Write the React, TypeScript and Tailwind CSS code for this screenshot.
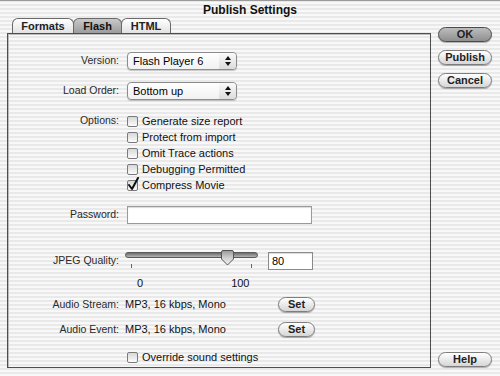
import React from "react";

const stripes =
  "bg-[repeating-linear-gradient(180deg,#e9e9e9_0px,#e9e9e9_2px,#f8f8f8_2px,#f8f8f8_4px)]";

function Label({ children }: { children: React.ReactNode }) {
  return <div className="w-[111px] shrink-0 text-right text-[10.5px] text-[#2a2a2a]">{children}</div>;
}

function Popup({ value }: { value: string }) {
  return (
    <div className="ml-[8px] flex h-[18px] w-[110px] items-center rounded-[4px] border border-[#8c8c8c] bg-gradient-to-b from-white to-[#f1f1f1] shadow-[0_1px_1px_rgba(0,0,0,0.2)]">
      <span className="flex-1 pl-[5px] text-[11px] leading-none">{value}</span>
      <span className="flex h-full w-[17px] flex-col items-center justify-center gap-[2px] rounded-r-[4px] bg-gradient-to-b from-[#fafafa] to-[#dcdcdc]">
        <svg width="6" height="4" viewBox="0 0 6 4"><path d="M3 0L6 4H0Z" fill="#111" /></svg>
        <svg width="6" height="4" viewBox="0 0 6 4"><path d="M0 0H6L3 4Z" fill="#111" /></svg>
      </span>
    </div>
  );
}

function Check({ label, checked = false }: { label: string; checked?: boolean }) {
  return (
    <div className="flex h-[16px] items-center">
      <span className="relative h-[11px] w-[11px] rounded-[2px] border border-[#7a7a7a] bg-gradient-to-b from-[#d8d8d8] to-[#fbfbfb]">
        {checked && (
          <svg className="absolute -left-[1px] -top-[4px]" width="13" height="15" viewBox="0 0 13 15">
            <path d="M2 8L5 12L11 1" stroke="#111" strokeWidth="2" fill="none" strokeLinecap="round" strokeLinejoin="round" />
          </svg>
        )}
      </span>
      <span className="ml-[4px] text-[11px] text-[#111]">{label}</span>
    </div>
  );
}

function Pill({ children, w, strong = false }: { children: React.ReactNode; w: string; strong?: boolean }) {
  return (
    <div
      className={`flex h-[15px] ${w} items-center justify-center rounded-full border ${
        strong ? "border-[#4a4a4a] from-[#bdbdbd] to-[#8f8f8f]" : "border-[#7d7d7d] from-white to-[#d6d6d6]"
      } bg-gradient-to-b text-[11px] font-bold text-[#222] shadow-[0_1px_1px_rgba(0,0,0,0.3)]`}
    >
      {children}
    </div>
  );
}

function Tab({ label, w, active = false }: { label: string; w: string; active?: boolean }) {
  return (
    <div
      className={`-mr-px flex h-[15px] ${w} items-center justify-center rounded-t-[6px] border border-b-0 border-[#6a6a6a] text-[11px] font-bold ${
        active ? "bg-gradient-to-b from-[#c9c9c9] to-[#9c9c9c] text-[#111]" : "bg-gradient-to-b from-white to-[#e2e2e2] text-[#222]"
      }`}
    >
      {label}
    </div>
  );
}

export default function App() {
  const quality = 80;
  return (
    <div className={`h-[376px] w-[500px] overflow-hidden font-['Liberation_Sans',Arial,sans-serif] ${stripes}`}>
      <div className="flex h-[18px] items-center justify-center border-t border-[#9a9a9a] text-[12px] font-bold text-[#111]">
        Publish Settings
      </div>
      <div className="flex h-[358px]">
        <div className="ml-[7px] w-[424px]">
          <div className="flex h-[15px] items-end pl-[5px]">
            <Tab label="Formats" w="w-[62px]" />
            <Tab label="Flash" w="w-[49px]" active />
            <Tab label="HTML" w="w-[50px]" />
          </div>
          <div className="h-[335px] border border-[#4e4e4e] shadow-[inset_1px_1px_0_#bcbcbc]">
            <div className="pt-[18px]">
              <div className="flex h-[18px] items-center">
                <Label>Version:</Label>
                <Popup value="Flash Player 6" />
              </div>
              <div className="mt-[12px] flex h-[18px] items-center">
                <Label>Load Order:</Label>
                <Popup value="Bottom up" />
              </div>
              <div className="mt-[13px] flex">
                <div className="flex h-[16px] items-center">
                  <Label>Options:</Label>
                </div>
                <div className="ml-[8px]">
                  <Check label="Generate size report" />
                  <Check label="Protect from import" />
                  <Check label="Omit Trace actions" />
                  <Check label="Debugging Permitted" />
                  <Check label="Compress Movie" checked />
                </div>
              </div>
              <div className="mt-[13px] flex h-[18px] items-center">
                <Label>Password:</Label>
                <div className="ml-[8px] h-[18px] w-[185px] border border-[#9a9a9a] bg-white shadow-[inset_0_1px_1px_rgba(0,0,0,0.15)]" />
              </div>
              <div className="mt-[28px] flex h-[18px] items-center">
                <Label>JPEG Quality:</Label>
                <div className="relative ml-[6px] h-[18px] w-[133px]">
                  <div className="absolute left-0 right-0 top-0 h-[6px] rounded-full border border-[#5a5a5a] bg-gradient-to-b from-[#6c6c6c] to-[#b5b5b5]" />
                  <div className="absolute left-[6px] top-[12px] h-[4px] w-px bg-[#666]" />
                  <div className="absolute left-[126px] top-[12px] h-[4px] w-px bg-[#666]" />
                  <svg
                    className="absolute -top-[2px]"
                    style={{ left: 6 + (quality / 100) * 120 - 6 }}
                    width="13"
                    height="16"
                    viewBox="0 0 13 16"
                  >
                    <defs>
                      <linearGradient id="th" x1="0" y1="0" x2="0" y2="1">
                        <stop offset="0" stopColor="#9a9a9a" />
                        <stop offset="0.5" stopColor="#cfcfcf" />
                        <stop offset="1" stopColor="#f4f4f4" />
                      </linearGradient>
                    </defs>
                    <path d="M2 0.5H11Q12.5 0.5 12.5 2V9L6.5 15L0.5 9V2Q0.5 0.5 2 0.5Z" fill="url(#th)" stroke="#555" />
                  </svg>
                </div>
                <div className="ml-[10px] flex h-[18px] w-[45px] items-center border border-[#8a8a8a] bg-white pl-[3px] text-[11px] shadow-[inset_0_1px_1px_rgba(0,0,0,0.15)]">
                  {quality}
                </div>
              </div>
              <div className="mt-[6px] flex h-[14px] items-center text-[11px] text-[#111]">
                <span className="ml-[129px]">0</span>
                <span className="ml-[88px]">100</span>
              </div>
              <div className="mt-[7px] flex h-[15px] items-center">
                <Label>Audio Stream:</Label>
                <span className="ml-[6px] w-[153px] text-[11px] text-[#111]">MP3, 16 kbps, Mono</span>
                <Pill w="w-[37px]">Set</Pill>
              </div>
              <div className="mt-[10px] flex h-[15px] items-center">
                <Label>Audio Event:</Label>
                <span className="ml-[6px] w-[153px] text-[11px] text-[#111]">MP3, 16 kbps, Mono</span>
                <Pill w="w-[37px]">Set</Pill>
              </div>
              <div className="mt-[13px] flex h-[14px] items-center pl-[119px]">
                <Check label="Override sound settings" />
              </div>
            </div>
          </div>
        </div>
        <div className="ml-[7px] flex w-[54px] flex-col pb-[9px] pt-[9px]">
          <Pill w="w-[54px]" strong>OK</Pill>
          <div className="mt-[8px]"><Pill w="w-[54px]">Publish</Pill></div>
          <div className="mt-[8px]"><Pill w="w-[54px]">Cancel</Pill></div>
          <div className="mt-auto"><Pill w="w-[54px]">Help</Pill></div>
        </div>
      </div>
    </div>
  );
}
